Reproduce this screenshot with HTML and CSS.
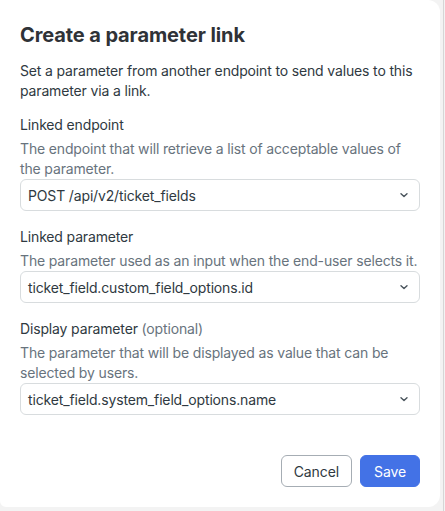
FILE: index.html
```html
<!DOCTYPE html>
<html lang="en">
<head>
<meta charset="utf-8">
<title>Create a parameter link</title>
<link rel="stylesheet" href="styles.css">
</head>
<body>
<div class="backdrop">
  <div class="modal">
    <h1 class="title">Create a parameter link</h1>
    <p class="desc">Set a parameter from another endpoint to send values to this parameter via a link.</p>

    <div class="field">
      <div class="label">Linked endpoint</div>
      <div class="hint">The endpoint that will retrieve a list of acceptable values of the parameter.</div>
      <div class="select">
        <span class="value">POST /api/v2/ticket_fields</span>
        <svg class="chev" width="12" height="12" viewBox="0 0 12 12"><path d="M3 4.8 L6 7.6 L9 4.8" fill="none" stroke="#49545c" stroke-width="1.4" stroke-linecap="round" stroke-linejoin="round"/></svg>
      </div>
    </div>

    <div class="field">
      <div class="label">Linked parameter</div>
      <div class="hint">The parameter used as an input when the end-user selects it.</div>
      <div class="select">
        <span class="value">ticket_field.custom_field_options.id</span>
        <svg class="chev" width="12" height="12" viewBox="0 0 12 12"><path d="M3 4.8 L6 7.6 L9 4.8" fill="none" stroke="#49545c" stroke-width="1.4" stroke-linecap="round" stroke-linejoin="round"/></svg>
      </div>
    </div>

    <div class="field">
      <div class="label">Display parameter <span class="opt">(optional)</span></div>
      <div class="hint">The parameter that will be displayed as value that can be selected by users.</div>
      <div class="select">
        <span class="value">ticket_field.system_field_options.name</span>
        <svg class="chev" width="12" height="12" viewBox="0 0 12 12"><path d="M3 4.8 L6 7.6 L9 4.8" fill="none" stroke="#49545c" stroke-width="1.4" stroke-linecap="round" stroke-linejoin="round"/></svg>
      </div>
    </div>

    <div class="footer">
      <button class="btn btn-secondary">Cancel</button>
      <button class="btn btn-primary">Save</button>
    </div>
  </div>
</div>
</body>
</html>
```
FILE: styles.css
```css
html, body {
  margin: 0;
  padding: 0;
}
body {
  background: #f3f3f3;
  font-family: Inter, "Noto Sans", "Liberation Sans", sans-serif;
  color: #2f3941;
  width: 445px;
  height: 511px;
  overflow: hidden;
  letter-spacing: -0.15px;
}
.backdrop {
  width: 444px;
  height: 511px;
  border-right: 1px solid #d6d6d6;
  box-sizing: border-box;
}
.modal {
  width: 440px;
  background: #ffffff;
  border-radius: 0 12px 12px 6px;
  box-sizing: border-box;
  padding: 23px 20px 20px 20px;
}
.title {
  margin: 0;
  font-size: 20px;
  line-height: 24px;
  font-weight: 700;
  letter-spacing: -0.1px;
  color: #2f3237;
}
.desc {
  margin: 14px 0 0 0;
  font-size: 14px;
  line-height: 20px;
  color: #2f3941;
}
.field {
  margin-top: 14px;
}
.field + .field {
  margin-top: 16px;
}
.label {
  font-size: 14px;
  line-height: 20px;
  color: #2f3941;
}
.opt {
  color: #68737d;
}
.hint {
  margin-top: 4px;
  font-size: 14px;
  line-height: 20px;
  color: #68737d;
}
.select {
  margin-top: 0;
  height: 32px;
  box-sizing: border-box;
  border: 1px solid #d8dcde;
  border-radius: 6px;
  display: flex;
  align-items: center;
  justify-content: space-between;
  padding: 0 9px 0 7px;
  font-size: 14px;
  color: #2f3941;
}
.chev {
  display: block;
}
.footer {
  margin-top: 40px;
  display: flex;
  justify-content: flex-end;
  gap: 8px;
}
.btn {
  height: 32px;
  box-sizing: border-box;
  border-radius: 6px;
  font-family: Inter, "Noto Sans", "Liberation Sans", sans-serif;
  font-size: 14px;
  letter-spacing: -0.1px;
  padding: 0 12px;
  cursor: pointer;
}
.btn-secondary {
  background: #ffffff;
  border: 1px solid #a6adb4;
  color: #2f3941;
}
.btn-primary {
  background: #4372e6;
  border: 1px solid #4372e6;
  color: #ffffff;
  padding: 0 13px;
}
```
